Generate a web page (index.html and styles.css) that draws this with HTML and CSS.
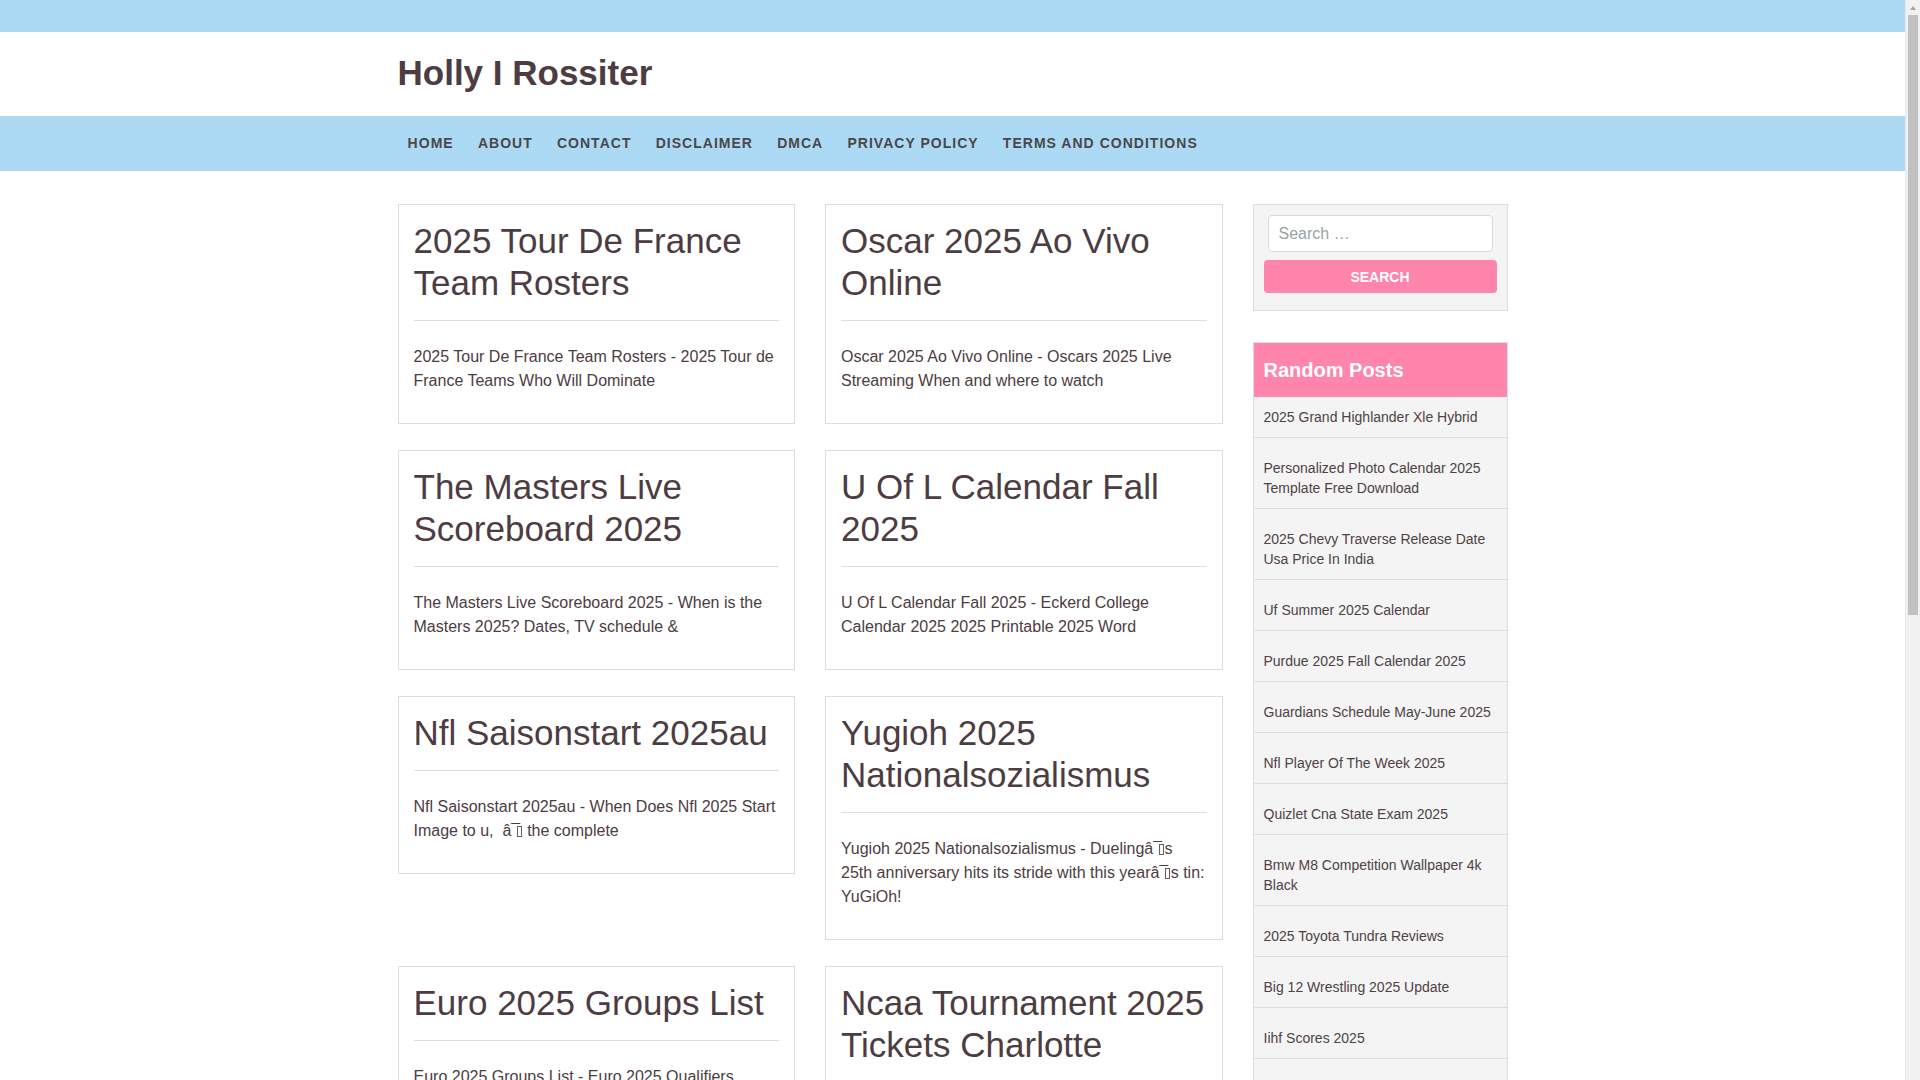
FILE: index.html
```html
<!DOCTYPE html>
<html lang="en">
<head>
<meta charset="utf-8">
<title>Holly I Rossiter</title>
<link rel="stylesheet" href="styles.css">
</head>
<body>
<div class="page">
<div class="topbar"></div>
<header class="site-header">
  <div class="container">
    <h1 class="site-title">Holly I Rossiter</h1>
  </div>
</header>
<nav class="main-nav">
  <div class="container">
    <ul class="menu">
      <li><a href="#">Home</a></li>
      <li><a href="#">About</a></li>
      <li><a href="#">Contact</a></li>
      <li><a href="#">Disclaimer</a></li>
      <li><a href="#">DMCA</a></li>
      <li><a href="#">Privacy Policy</a></li>
      <li><a href="#">Terms and Conditions</a></li>
    </ul>
  </div>
</nav>
<div class="container content">
  <main class="posts">
    <article class="card">
      <h2 class="card-title">2025 Tour De France Team Rosters</h2>
      <div class="card-rule"></div>
      <p class="card-excerpt">2025 Tour De France Team Rosters - 2025 Tour de France Teams Who Will Dominate</p>
    </article>
    <article class="card">
      <h2 class="card-title">Oscar 2025 Ao Vivo Online</h2>
      <div class="card-rule"></div>
      <p class="card-excerpt">Oscar 2025 Ao Vivo Online - Oscars 2025 Live Streaming When and where to watch</p>
    </article>
    <article class="card">
      <h2 class="card-title">The Masters Live Scoreboard 2025</h2>
      <div class="card-rule"></div>
      <p class="card-excerpt">The Masters Live Scoreboard 2025 - When is the Masters 2025? Dates, TV schedule &amp;</p>
    </article>
    <article class="card">
      <h2 class="card-title">U Of L Calendar Fall 2025</h2>
      <div class="card-rule"></div>
      <p class="card-excerpt">U Of L Calendar Fall 2025 - Eckerd College Calendar 2025 2025 Printable 2025 Word</p>
    </article>
    <article class="card">
      <h2 class="card-title">Nfl Saisonstart 2025au</h2>
      <div class="card-rule"></div>
      <p class="card-excerpt">Nfl Saisonstart 2025au - When Does Nfl 2025 Start Image to u, &nbsp;â<span class="mac">¯</span><span class="tofu"></span> the complete</p>
    </article>
    <article class="card">
      <h2 class="card-title">Yugioh 2025 Nationalsozialismus</h2>
      <div class="card-rule"></div>
      <p class="card-excerpt">Yugioh 2025 Nationalsozialismus - Duelingâ<span class="mac">¯</span><span class="tofu"></span>s 25th anniversary hits its stride with this yearâ<span class="mac">¯</span><span class="tofu"></span>s tin: YuGiOh!</p>
    </article>
    <article class="card">
      <h2 class="card-title">Euro 2025 Groups List</h2>
      <div class="card-rule"></div>
      <p class="card-excerpt">Euro 2025 Groups List - Euro 2025 Qualifiers Groups Schedule and Fixtures</p>
    </article>
    <article class="card">
      <h2 class="card-title">Ncaa Tournament 2025 Tickets Charlotte</h2>
      <div class="card-rule"></div>
      <p class="card-excerpt">Ncaa Tournament 2025 Tickets Charlotte - March Madness 2025 First and Second Rounds</p>
    </article>
  </main>
  <aside class="sidebar">
    <section class="widget search-widget">
      <input class="search-field" type="search" placeholder="Search …">
      <button class="search-button" type="button">Search</button>
    </section>
    <section class="widget posts-widget">
      <h3 class="widget-title">Random Posts</h3>
      <ul class="post-list">
        <li><a href="#">2025 Grand Highlander Xle Hybrid</a></li>
        <li><a href="#">Personalized Photo Calendar 2025 Template Free Download</a></li>
        <li><a href="#">2025 Chevy Traverse Release Date Usa Price In India</a></li>
        <li><a href="#">Uf Summer 2025 Calendar</a></li>
        <li><a href="#">Purdue 2025 Fall Calendar 2025</a></li>
        <li><a href="#">Guardians Schedule May-June 2025</a></li>
        <li><a href="#">Nfl Player Of The Week 2025</a></li>
        <li><a href="#">Quizlet Cna State Exam 2025</a></li>
        <li><a href="#">Bmw M8 Competition Wallpaper 4k Black</a></li>
        <li><a href="#">2025 Toyota Tundra Reviews</a></li>
        <li><a href="#">Big 12 Wrestling 2025 Update</a></li>
        <li><a href="#">Iihf Scores 2025</a></li>
        <li><a href="#">Nhl Draft Order 2025</a></li>
        <li><a href="#">2025 Honda Pilot Trailsport Review</a></li>
        <li><a href="#">March Calendar 2025 Printable</a></li>
      </ul>
    </section>
  </aside>
</div>
</div>
<div class="scrollbar">
  <div class="scroll-arrow"></div>
  <div class="scroll-thumb"></div>
</div>
</body>
</html>
```
FILE: styles.css
```css
html, body {
  margin: 0;
  padding: 0;
}
body {
  font-family: "Liberation Sans", Arial, sans-serif;
  color: #4d3c42;
  background: #ffffff;
}
a {
  color: inherit;
  text-decoration: none;
}
.page {
  margin-right: 15px;
}
.container {
  width: 1110px;
  margin: 0 auto;
}
.topbar {
  height: 32px;
  background: #acdaf4;
}
.site-header {
  height: 84px;
  box-sizing: border-box;
  padding-top: 20px;
}
.site-title {
  margin: 0;
  font-size: 35px;
  font-weight: bold;
  line-height: 42px;
  color: #4d3c42;
}
.main-nav {
  height: 55px;
  background: #acdaf4;
}
.menu {
  list-style: none;
  margin: 0 0 0 -2px;
  padding: 0;
  display: flex;
}
.menu a {
  display: block;
  padding: 0 12.1px;
  line-height: 55px;
  font-size: 14px;
  font-weight: bold;
  letter-spacing: 1.02px;
  text-transform: uppercase;
  color: #4b4748;
}
.content {
  display: grid;
  grid-template-columns: 825px 255px;
  column-gap: 30px;
  align-items: start;
  margin-top: 33px;
  padding-bottom: 40px;
}
.posts {
  display: grid;
  grid-template-columns: 1fr 1fr;
  column-gap: 30px;
  row-gap: 26px;
  align-items: start;
  align-content: start;
}
.card {
  border: 1px solid #dddddd;
  padding: 15px;
  background: #ffffff;
}
.card-title {
  margin: 0 0 16px;
  font-size: 35px;
  font-weight: normal;
  line-height: 42px;
  color: #4d3c42;
}
.card-rule {
  height: 1px;
  background: #dddddd;
}
.card-excerpt {
  margin: 24px 0 15px;
  font-size: 16px;
  line-height: 24px;
  color: #4d3c42;
}
.mac {
  letter-spacing: -3px;
}
.tofu {
  display: inline-block;
  box-sizing: border-box;
  width: 5px;
  height: 11px;
  margin: 0 0.5px 0 0;
  border: 1px solid #6a5c60;
  vertical-align: -1px;
}
.sidebar {
  display: flex;
  flex-direction: column;
  gap: 31px;
}
.widget {
  border: 1px solid #dddddd;
  background: #f4f4f4;
}
.search-widget {
  padding: 10px 10px 17px;
  display: flex;
  flex-direction: column;
}
.search-field {
  box-sizing: border-box;
  margin: 0 4px;
  height: 37px;
  border: 1px solid #d8d8d8;
  border-radius: 4px;
  background: #ffffff;
  padding: 0 10px;
  font-family: "Liberation Sans", Arial, sans-serif;
  font-size: 16px;
  color: #4d3c42;
  outline: none;
}
.search-field::placeholder {
  color: #97a3a3;
}
.search-button {
  margin-top: 8px;
  height: 33px;
  border: none;
  border-radius: 4px;
  background: #ff85ad;
  color: #ffffff;
  font-family: "Liberation Sans", Arial, sans-serif;
  font-size: 14px;
  font-weight: bold;
  text-transform: uppercase;
}
.widget-title {
  margin: 0;
  padding: 15px 10px;
  background: #ff85ad;
  color: #ffffff;
  font-size: 20px;
  font-weight: bold;
  line-height: 24px;
}
.post-list {
  list-style: none;
  margin: 0;
  padding: 0;
}
.post-list li {
  padding: 10px 10px;
  border-bottom: 1px solid #dddddd;
  font-size: 14px;
  line-height: 20px;
  color: #4d4245;
}
.post-list li + li {
  padding-top: 20px;
}
.scrollbar {
  position: fixed;
  top: 0;
  right: 0;
  width: 15px;
  height: 100vh;
  background: #f1f1f1;
  border-left: 1px solid #e8e8e8;
  box-sizing: border-box;
}
.scroll-arrow {
  width: 0;
  height: 0;
  margin: 6px auto 0;
  border-left: 3.5px solid transparent;
  border-right: 3.5px solid transparent;
  border-bottom: 4px solid #a3a3a3;
}
.scroll-thumb {
  margin: 5px 2px 0 2px;
  height: 600px;
  background: #c1c1c1;
}
```
